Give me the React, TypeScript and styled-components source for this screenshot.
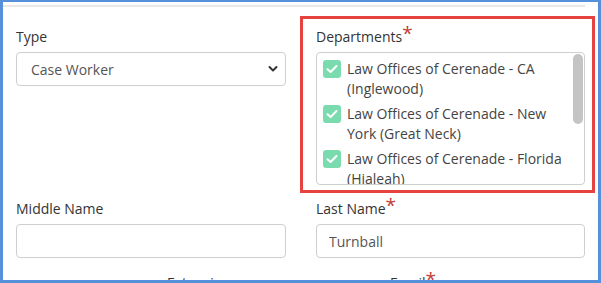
import * as React from 'react'
import styled, { createGlobalStyle } from 'styled-components'

const GlobalStyle = createGlobalStyle`
  html, body {
    margin: 0;
    padding: 0;
    background: #ffffff;
    overflow: hidden;
  }
  body {
    font-family: "Open Sans", "Noto Sans", sans-serif;
  }
`

const ui = {} as any
ui.Frame = styled.div`
  box-sizing: border-box;
  width: 601px;
  height: 283px;
  overflow: hidden;
  border-style: solid;
  border-color: #5690da;
  border-width: 2px 3px 3px 3px;
  background: #fff;
`
ui.Rule = styled.div`
  margin-top: 3px;
  width: 582px;
  border-top: 2px solid #e8e8e8;
`
ui.Form = styled.div`
  display: grid;
  grid-template-columns: 270px 269px;
  column-gap: 30px;
  row-gap: 14px;
  padding: 20px 0 0 13px;
`
ui.Field = styled.div`
  position: relative;
  display: flex;
  flex-direction: column;
  align-items: stretch;
`
ui.Label = styled.label<{ $indent?: number; $drop?: number }>`
  display: block;
  margin: ${(p: any) => p.$drop || 0}px 0 5px ${(p: any) => p.$indent || 0}px;
  font-size: 14px;
  line-height: 20px;
  font-weight: 500;
  color: #333;
`
ui.Required = styled.span`
  display: inline-block;
  vertical-align: top;
  margin-top: -3px;
  font-size: 19px;
  line-height: 19px;
  color: #c23b34;
`
ui.Input = styled.input`
  box-sizing: border-box;
  width: 100%;
  height: 34px;
  padding: 0 12px;
  border: 1px solid #cfcfcf;
  border-radius: 4px;
  font-family: inherit;
  font-size: 14px;
  color: #555;
  background: #fff;
  outline: 0;
`
ui.SelectWrap = styled.div`
  position: relative;
`
ui.Select = styled.select`
  box-sizing: border-box;
  width: 100%;
  height: 34px;
  padding: 0 14px;
  appearance: none;
  border: 1px solid #cfcfcf;
  border-radius: 4px;
  font-family: inherit;
  font-size: 14px;
  color: #555;
  background: #fff;
  outline: 0;
`
ui.Chevron = styled.svg`
  position: absolute;
  right: 8px;
  top: 13px;
  pointer-events: none;
`
ui.ListBox = styled.div`
  position: relative;
  box-sizing: border-box;
  height: 133px;
  border: 1px solid #cfcfcf;
  border-radius: 4px;
  overflow: hidden;
`
ui.List = styled.div`
  padding: 6px 14px 10px 6px;
`
ui.ScrollThumb = styled.div`
  position: absolute;
  top: 1px;
  right: 1px;
  width: 10px;
  height: 70px;
  border-radius: 5px;
  background: #c4c4c4;
`
ui.Option = styled.div`
  display: flex;
  align-items: flex-start;
  gap: 6px;
  margin-bottom: 5px;
  font-size: 14px;
  line-height: 20px;
  color: #444;
`
ui.Check = styled.span`
  flex-shrink: 0;
  display: flex;
  align-items: center;
  justify-content: center;
  width: 18px;
  height: 18px;
  margin-top: 1px;
  border-radius: 3px;
  background: #7adcae;
`
ui.Highlight = styled.div`
  position: absolute;
  left: -16px;
  right: -10px;
  top: -11px;
  bottom: -8px;
  border: 3px solid #e5433f;
  pointer-events: none;
`

const departments = [
  'Law Offices of Cerenade - CA (Inglewood)',
  'Law Offices of Cerenade - New York (Great Neck)',
  'Law Offices of Cerenade - Florida (Hialeah)',
  'Law Offices of Cerenade - Texas (Houston)',
  'Law Offices of Cerenade - Illinois (Chicago)',
]

const CheckMark = () => (
  <svg width='12' height='10' viewBox='0 0 12 10'>
    <path d='M1.5 5.2 L4.6 8 L10.5 2' fill='none' stroke='#fff' strokeWidth='2' strokeLinecap='round' strokeLinejoin='round' />
  </svg>
)

export default class App extends React.Component<{}, {}> {
  render(): JSX.Element {
    return (
      <ui.Frame>
        <GlobalStyle />
        <ui.Rule />
        <ui.Form>
          <ui.Field>
            <ui.Label>Type</ui.Label>
            <ui.SelectWrap>
              <ui.Select defaultValue='case'>
                <option value='case'>Case Worker</option>
                <option value='attorney'>Attorney</option>
              </ui.Select>
              <ui.Chevron width='10' height='8' viewBox='0 0 10 8'>
                <path d='M1.5 2 L5 5.5 L8.5 2' fill='none' stroke='#333' strokeWidth='2' strokeLinecap='round' strokeLinejoin='round' />
              </ui.Chevron>
            </ui.SelectWrap>
          </ui.Field>

          <ui.Field>
            <ui.Label>Departments<ui.Required>*</ui.Required></ui.Label>
            <ui.ListBox>
              <ui.List>
                {departments.map(name => (
                  <ui.Option key={name}>
                    <ui.Check><CheckMark /></ui.Check>
                    <span>{name}</span>
                  </ui.Option>
                ))}
              </ui.List>
              <ui.ScrollThumb />
            </ui.ListBox>
            <ui.Highlight />
          </ui.Field>

          <ui.Field>
            <ui.Label>Middle Name</ui.Label>
            <ui.Input defaultValue='' />
          </ui.Field>

          <ui.Field>
            <ui.Label>Last Name<ui.Required>*</ui.Required></ui.Label>
            <ui.Input defaultValue='Turnball' />
          </ui.Field>

          <ui.Field>
            <ui.Label $indent={151} $drop={1}>Extension</ui.Label>
          </ui.Field>

          <ui.Field>
            <ui.Label $indent={74} $drop={1}>Email<ui.Required>*</ui.Required></ui.Label>
          </ui.Field>
        </ui.Form>
      </ui.Frame>
    )
  }
}
